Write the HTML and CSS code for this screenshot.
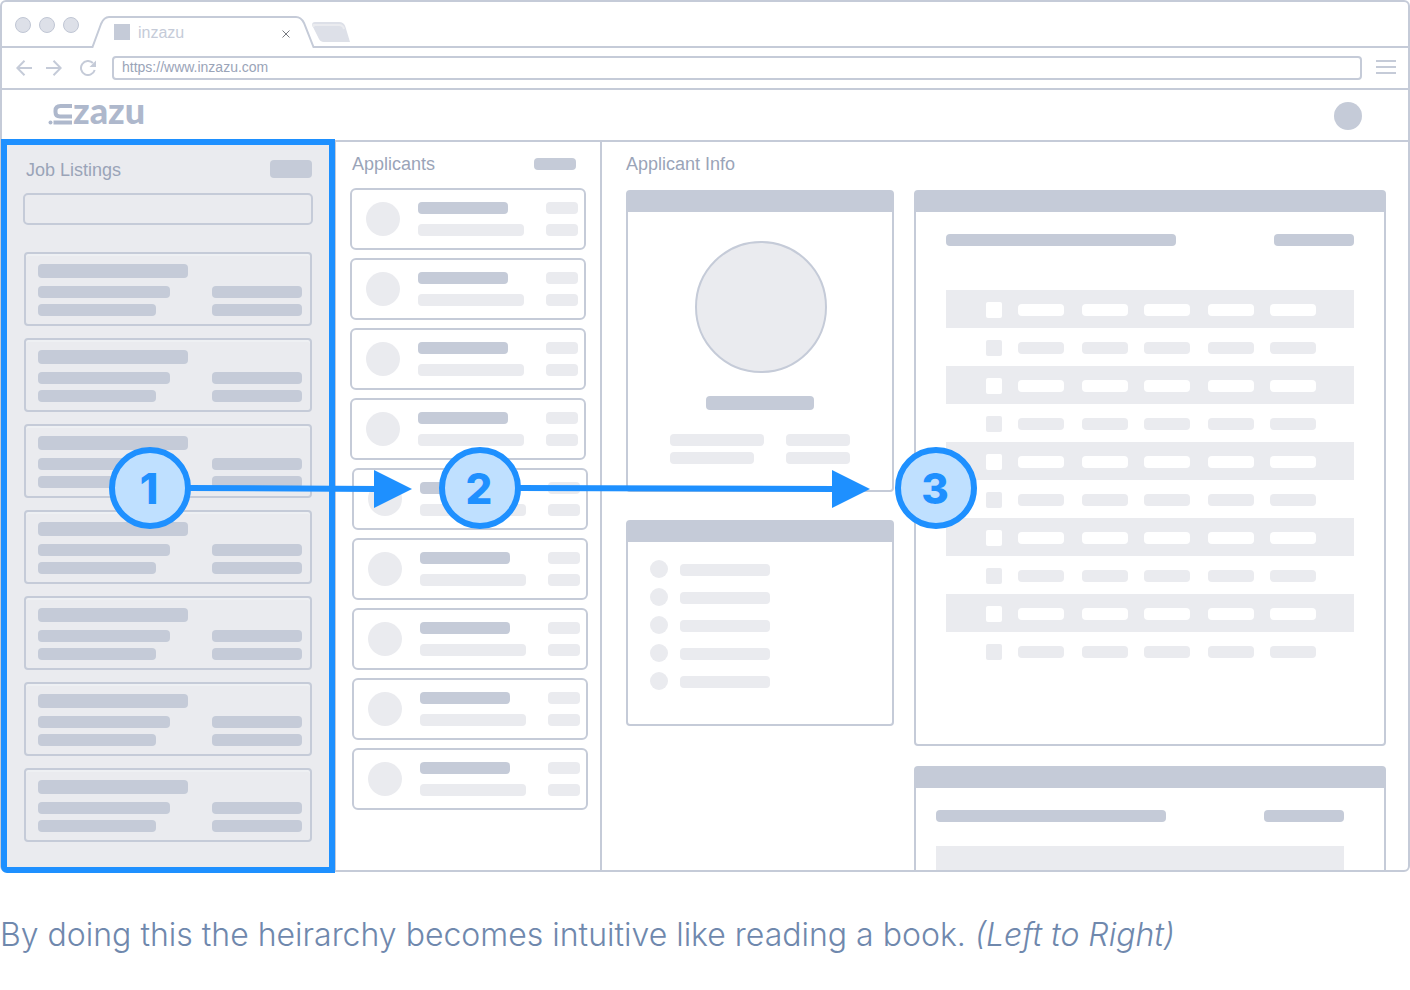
FILE: index.html
```html
<!DOCTYPE html>
<html lang="en">
<head>
<meta charset="utf-8">
<meta name="viewport" content="width=device-width, initial-scale=1">
<title>inzazu</title>
<link rel="stylesheet" href="styles.css">
</head>
<body>
<figure class="figure">
  <div class="browser">
    <div class="titlebar">
      <div class="window-dots"><i></i><i></i><i></i></div>
      <div class="tab">
        <svg class="tab-shape" viewBox="90 15 226 33" aria-hidden="true"><path d="M90 47H92.500L101 24Q104 17 109 17H296Q301 17 304 23L313.500 47H316"/></svg>
        <span class="favicon"></span>
        <span class="tab-title">inzazu</span>
        <button class="tab-close" aria-label="Close tab"><svg viewBox="0 0 8 8"><path d="M.5 .5 7.500 7.500M7.500 .5 .5 7.500"/></svg></button>
      </div>
      <div class="tab-rest">
        <button class="new-tab" aria-label="New tab"><svg viewBox="0 0 38 20"><path fill="#dde0e8" d="M3 0H27Q32 0 33.500 5L38 20H12Q8 20 6.500 16L0 3Q0 0 3 0Z"/><path fill="none" stroke="#eaebef" stroke-width="2" d="M1.500 5V3H27Q31 3 32 7"/></svg></button>
      </div>
    </div>
    <div class="toolbar">
      <button class="nav-button" aria-label="Back"><svg viewBox="0 0 16 16"><path d="M16 8H1.500M8.500 .8 1.300 8 8.500 15.200"/></svg></button>
      <button class="nav-button" aria-label="Forward"><svg viewBox="0 0 16 16"><path d="M0 8H14.500M7.500 .8 14.700 8 7.500 15.200"/></svg></button>
      <button class="nav-button nav-reload" aria-label="Reload"><svg viewBox="0 0 16 16"><path d="M14.700 10A7 7 0 1 1 12.900 3"/><path class="solid" d="M16 .5V7H9.500Z"/></svg></button>
      <input class="address" type="text" aria-label="Address" value="https://www.inzazu.com">
      <button class="menu-button" aria-label="Menu"><i></i><i></i><i></i></button>
    </div>
    <header class="app-header">
      <svg class="logo" viewBox="0 0 98 26" role="img" aria-label="inzazu">
        <circle cx="2.500" cy="19.500" r="2"/>
        <path class="logo-stroke" d="M5.500 19.500H24M24 3H12.500Q7.500 3 7.500 7.600V9Q7.500 13.500 12 13.500H24"/>
        <text x="25" y="21">zazu</text>
      </svg>
      <span class="user"></span>
    </header>
    <main class="columns">
      <section class="jobs">
        <div class="jobs-head"><h2>Job Listings</h2><button class="bar jobs-action" aria-label="New job"></button></div>
        <div class="search-row"><input class="search" type="text" aria-label="Search jobs"></div>
        <div class="job-list">
          <article class="job"><i class="bar title"></i><i class="bar a"></i><i class="bar c"></i><i class="bar b"></i><i class="bar c"></i></article>
          <article class="job"><i class="bar title"></i><i class="bar a"></i><i class="bar c"></i><i class="bar b"></i><i class="bar c"></i></article>
          <article class="job"><i class="bar title"></i><i class="bar a"></i><i class="bar c"></i><i class="bar b"></i><i class="bar c"></i></article>
          <article class="job"><i class="bar title"></i><i class="bar a"></i><i class="bar c"></i><i class="bar b"></i><i class="bar c"></i></article>
          <article class="job"><i class="bar title"></i><i class="bar a"></i><i class="bar c"></i><i class="bar b"></i><i class="bar c"></i></article>
          <article class="job"><i class="bar title"></i><i class="bar a"></i><i class="bar c"></i><i class="bar b"></i><i class="bar c"></i></article>
          <article class="job"><i class="bar title"></i><i class="bar a"></i><i class="bar c"></i><i class="bar b"></i><i class="bar c"></i></article>
        </div>
      </section>
      <section class="applicants">
        <div class="applicants-head"><h2>Applicants</h2><button class="bar applicants-action" aria-label="Filter applicants"></button></div>
        <div class="people">
          <article class="person"><i class="face"></i><i class="bar name"></i><i class="bar light tag"></i><i class="bar light role"></i><i class="bar light tag"></i></article>
          <article class="person"><i class="face"></i><i class="bar name"></i><i class="bar light tag"></i><i class="bar light role"></i><i class="bar light tag"></i></article>
          <article class="person"><i class="face"></i><i class="bar name"></i><i class="bar light tag"></i><i class="bar light role"></i><i class="bar light tag"></i></article>
          <article class="person"><i class="face"></i><i class="bar name"></i><i class="bar light tag"></i><i class="bar light role"></i><i class="bar light tag"></i></article>
        </div>
        <div class="people people-more">
          <article class="person"><i class="face"></i><i class="bar name"></i><i class="bar light tag"></i><i class="bar light role"></i><i class="bar light tag"></i></article>
          <article class="person"><i class="face"></i><i class="bar name"></i><i class="bar light tag"></i><i class="bar light role"></i><i class="bar light tag"></i></article>
          <article class="person"><i class="face"></i><i class="bar name"></i><i class="bar light tag"></i><i class="bar light role"></i><i class="bar light tag"></i></article>
          <article class="person"><i class="face"></i><i class="bar name"></i><i class="bar light tag"></i><i class="bar light role"></i><i class="bar light tag"></i></article>
          <article class="person"><i class="face"></i><i class="bar name"></i><i class="bar light tag"></i><i class="bar light role"></i><i class="bar light tag"></i></article>
        </div>
      </section>
      <section class="info">
        <h2>Applicant Info</h2>
        <div class="info-grid">
          <div class="stack">
            <div class="panel profile">
              <i class="portrait"></i>
              <i class="bar profile-name"></i>
              <div class="facts"><i class="bar light f1"></i><i class="bar light"></i><i class="bar light f2"></i><i class="bar light"></i></div>
            </div>
            <div class="panel contact">
              <div class="contact-row"><i></i><i class="bar light"></i></div>
              <div class="contact-row"><i></i><i class="bar light"></i></div>
              <div class="contact-row"><i></i><i class="bar light"></i></div>
              <div class="contact-row"><i></i><i class="bar light"></i></div>
              <div class="contact-row"><i></i><i class="bar light"></i></div>
            </div>
          </div>
          <div class="stack stack-wide">
            <div class="panel details">
              <div class="details-head"><i class="bar"></i><i class="bar"></i></div>
              <div class="rows">
                <div class="row"><i></i><i></i><i></i><i></i><i></i><i></i></div>
                <div class="row"><i></i><i></i><i></i><i></i><i></i><i></i></div>
                <div class="row"><i></i><i></i><i></i><i></i><i></i><i></i></div>
                <div class="row"><i></i><i></i><i></i><i></i><i></i><i></i></div>
                <div class="row"><i></i><i></i><i></i><i></i><i></i><i></i></div>
                <div class="row"><i></i><i></i><i></i><i></i><i></i><i></i></div>
                <div class="row"><i></i><i></i><i></i><i></i><i></i><i></i></div>
                <div class="row"><i></i><i></i><i></i><i></i><i></i><i></i></div>
                <div class="row"><i></i><i></i><i></i><i></i><i></i><i></i></div>
                <div class="row"><i></i><i></i><i></i><i></i><i></i><i></i></div>
              </div>
            </div>
            <div class="panel history">
              <div class="details-head"><i class="bar"></i><i class="bar"></i></div>
              <div class="stripe"></div>
            </div>
          </div>
        </div>
      </section>
    </main>
  </div>
  <svg class="flow" viewBox="0 0 870 82" role="img" aria-label="Reading order, 1 to 3">
    <path class="flow-line" d="M80 41 268 42M410 41 726 42"/>
    <path class="flow-head" d="M265 23 303 42 265 61ZM723 23 761 42 723 61Z"/>
    <circle cx="41" cy="41" r="38"/><circle cx="371" cy="41" r="38"/><circle cx="827" cy="41" r="38"/>
    <text x="40" y="57">1</text><text x="370" y="57">2</text><text x="826" y="57">3</text>
  </svg>
  <figcaption>By doing this the heirarchy becomes intuitive like reading a book. <em>(Left to Right)</em></figcaption>
</figure>
</body>
</html>
```
FILE: styles.css
```css
:root {
  --line: #c5cbd8;
  --light: #eaebef;
  --label: #9aa4b8;
  --blue: #1e90ff;
}

* { box-sizing: border-box; }

body {
  margin: 0;
  background: #fff;
  font-family: "Liberation Sans", Arial, sans-serif;
}

button {
  padding: 0;
  border: 0;
  background: none;
}

svg { display: block; }

h2 {
  margin: 0;
  color: var(--label);
  font-size: 18px;
  font-weight: 400;
  line-height: 12px;
}

.figure {
  position: relative;
  margin: 0;
}

.browser {
  border: 2px solid var(--line);
  border-radius: 6px;
}

/* Tab strip */
.titlebar {
  display: flex;
  align-items: flex-end;
  height: 46px;
}

.window-dots {
  display: flex;
  gap: 8px;
  width: 88px;
  height: 46px;
  padding: 15px 0 0 13px;
  border-bottom: 2px solid var(--line);
}

.window-dots i {
  width: 16px;
  height: 16px;
  border: 1px solid #c0c6d4;
  border-radius: 50%;
  background: #dde0e8;
}

.tab {
  position: relative;
  display: flex;
  align-items: center;
  width: 226px;
  height: 33px;
  padding: 0 26px 0 24px;
}

.tab-shape {
  position: absolute;
  inset: 0;
  width: 226px;
  height: 33px;
  fill: none;
  stroke: var(--line);
  stroke-width: 2;
}

.favicon {
  width: 16px;
  height: 16px;
  background: var(--line);
}

.tab-title {
  flex: 1;
  margin: 2px 0 0 8px;
  color: var(--line);
  font-size: 16px;
  line-height: 20px;
}

.tab-close {
  width: 8px;
  height: 8px;
  margin-top: 5px;
}

.tab-close svg {
  width: 8px;
  height: 8px;
  stroke: #777a80;
}

.tab-rest {
  flex: 1;
  height: 46px;
  padding-top: 20px;
  border-bottom: 2px solid var(--line);
}

.new-tab {
  display: block;
  margin-left: -4px;
}

.new-tab svg {
  width: 38px;
  height: 20px;
}

/* Address bar */
.toolbar {
  display: flex;
  align-items: center;
  gap: 14px;
  height: 42px;
  padding: 0 12px 0 14px;
  border-bottom: 2px solid var(--line);
}

.nav-button svg {
  width: 16px;
  height: 16px;
  fill: none;
  stroke: var(--line);
  stroke-width: 2;
}

.nav-button .solid {
  fill: var(--line);
  stroke: none;
}

.nav-reload { margin: 0 2px 0 4px; }

.address {
  flex: 1;
  min-width: 0;
  height: 24px;
  padding: 0 8px 2px;
  border: 2px solid var(--line);
  border-radius: 4px;
  background: #fff;
  color: var(--label);
  font: 14px "Liberation Sans", Arial, sans-serif;
}

.menu-button {
  display: grid;
  gap: 4px;
  width: 20px;
  padding-bottom: 2px;
}

.menu-button i {
  height: 2px;
  background: var(--line);
}

/* App header */
.app-header {
  display: flex;
  align-items: center;
  justify-content: space-between;
  height: 52px;
  padding: 2px 46px 0;
  border-bottom: 2px solid var(--line);
}

.logo {
  width: 98px;
  height: 26px;
  fill: #aeb8cc;
}

.logo-stroke {
  fill: none;
  stroke: #aeb8cc;
  stroke-width: 4;
}

.logo text {
  font: 900 36px Lato, sans-serif;
}

.user {
  width: 28px;
  height: 28px;
  border-radius: 50%;
  background: var(--line);
}

/* Placeholder bars */
.bar {
  display: block;
  height: 12px;
  border-radius: 4px;
  background: var(--line);
}

.bar.light { background: var(--light); }

.columns { display: flex; }

/* Job listings */
.jobs {
  position: relative;
  flex: 0 0 334px;
  margin: -3px 0 -3px -1px;
  padding: 15px 17px 25px;
  border: 6px solid var(--blue);
  border-bottom-left-radius: 6px;
  background: var(--light);
}

.jobs-head {
  display: flex;
  align-items: center;
  justify-content: space-between;
  padding-left: 2px;
}

.jobs-head h2 { padding-top: 2px; }

.jobs-action {
  width: 42px;
  height: 18px;
}

.search-row { margin: 15px -1px 27px; }

.search {
  display: block;
  width: 100%;
  height: 32px;
  border: 2px solid var(--line);
  border-radius: 5px;
  background: transparent;
}

.job-list {
  display: grid;
  gap: 12px;
}

.job {
  display: grid;
  grid-template-columns: 1fr 90px;
  row-gap: 6px;
  padding: 10px 8px 8px 12px;
  border: 2px solid var(--line);
  border-radius: 4px;
  box-shadow: inset 0 2px 0 #eef0f3;
}

.job .title {
  grid-column: 1 / 3;
  width: 150px;
  height: 14px;
  margin-bottom: 2px;
}

.job .a { width: 132px; }
.job .b { width: 118px; }

/* Applicants */
.applicants {
  flex: 0 0 267px;
  padding: 16px 14px;
  border-left: 1px solid var(--line);
  border-right: 2px solid var(--line);
}

.applicants-head {
  display: flex;
  align-items: center;
  justify-content: space-between;
  margin-bottom: 18px;
  padding: 0 10px 0 2px;
}

.applicants-action { width: 42px; }

.people {
  display: grid;
  gap: 8px;
}

.people-more { margin: 8px -2px 0 2px; }

.person {
  display: grid;
  grid-template-columns: 52px 1fr 32px;
  row-gap: 10px;
  padding: 12px 6px 12px 14px;
  border: 2px solid var(--line);
  border-radius: 6px;
}

.face {
  grid-row: 1 / 3;
  width: 34px;
  height: 34px;
  border-radius: 50%;
  background: var(--light);
}

.name { width: 90px; }
.role { width: 106px; }

/* Applicant info */
.info {
  display: flex;
  flex: 1;
  flex-direction: column;
  min-width: 0;
  padding: 16px 22px 0 24px;
}

.info-grid {
  display: grid;
  flex: 1;
  grid-template-columns: 268px 1fr;
  gap: 20px;
  margin-top: 20px;
}

.stack {
  display: flex;
  flex-direction: column;
  gap: 28px;
}

.stack-wide { gap: 20px; }

.panel {
  border: 2px solid var(--line);
  border-top-width: 22px;
  border-radius: 4px;
}

.profile {
  display: flex;
  flex-direction: column;
  align-items: center;
  padding: 29px 0 26px;
}

.portrait {
  width: 132px;
  height: 132px;
  margin-left: 2px;
  border: 2px solid var(--line);
  border-radius: 50%;
  background: var(--light);
}

.profile-name {
  width: 108px;
  height: 14px;
  margin: 23px 0 24px;
}

.facts {
  display: grid;
  grid-template-columns: 116px 64px;
  row-gap: 6px;
}

.f1 { width: 94px; }
.f2 { width: 84px; }

.contact {
  display: grid;
  gap: 10px;
  padding: 18px 22px 34px;
}

.contact-row {
  display: flex;
  align-items: center;
  gap: 12px;
}

.contact-row i:first-child {
  width: 18px;
  height: 18px;
  border-radius: 50%;
  background: var(--light);
}

.contact-row .bar {
  width: 90px;
  margin-top: 2px;
}

.details { padding: 22px 30px 74px; }

.details-head {
  display: flex;
  justify-content: space-between;
}

.details-head .bar:first-child { width: 230px; }
.details-head .bar:last-child { width: 80px; }

.rows { margin-top: 44px; }

.row {
  display: grid;
  grid-template-columns: 32fr 64fr 62fr 64fr 62fr 46fr;
  align-items: center;
  height: 38px;
  padding: 2px 38px 0 40px;
}

.row i {
  width: 46px;
  height: 12px;
  border-radius: 4px;
  background: var(--light);
}

.row i:first-child {
  width: 16px;
  height: 16px;
  border-radius: 2px;
}

.row:nth-child(odd) { background: var(--light); }
.row:nth-child(odd) i { background: #fff; }

.history {
  display: flex;
  flex: 1;
  flex-direction: column;
  padding: 22px 40px 0 20px;
  border-bottom: 0;
  border-radius: 4px 4px 0 0;
}

.stripe {
  flex: 1;
  min-height: 24px;
  margin-top: 24px;
  background: var(--light);
}

/* Numbered markers and arrows over the columns */
.flow {
  position: absolute;
  top: 447px;
  left: 109px;
  width: 870px;
  height: 82px;
}

.flow circle {
  fill: #bfe0ff;
  stroke: var(--blue);
  stroke-width: 6;
}

.flow-line {
  fill: none;
  stroke: var(--blue);
  stroke-width: 6;
}

.flow-head { fill: var(--blue); }

.flow text {
  fill: var(--blue);
  font: 800 42px Inter, sans-serif;
  font-optical-sizing: none;
  text-anchor: middle;
}

figcaption {
  padding: 43px 0 36px;
  color: #6f88ad;
  font: 300 32px/40px Inter, sans-serif;
  font-optical-sizing: none;
}
```
